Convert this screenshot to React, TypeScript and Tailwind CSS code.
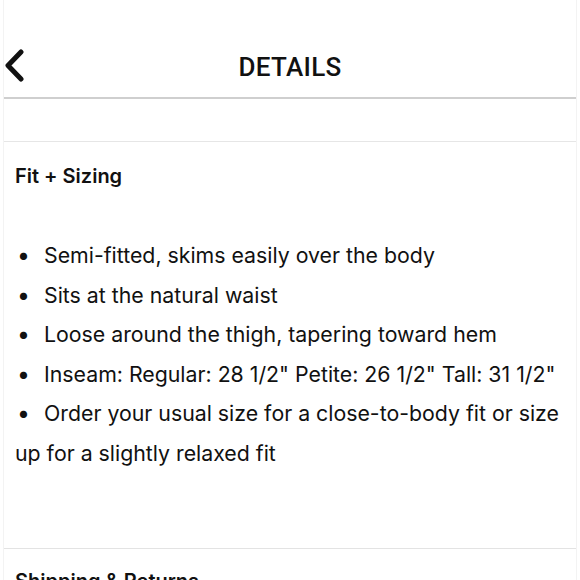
import React from 'react';

const bullets = [
    'Semi-fitted, skims easily over the body',
    'Sits at the natural waist',
    'Loose around the thigh, tapering toward hem',
    'Inseam: Regular: 28 1/2" Petite: 26 1/2" Tall: 31 1/2"',
];

export default function App() {
    const body = { fontFamily: 'Inter, "Noto Sans", sans-serif', fontVariantLigatures: 'none' as const };

    return (
        <div className="w-[580px] h-[580px] overflow-hidden bg-white text-[#111]">
            <div className="mx-[3px] h-full border-x border-[#f3f3f3]">
                <header className="relative h-[99px] border-b-2 border-[#cfcfcf] flex items-end pb-[15px] justify-center">
                    <button className="absolute left-0 top-[49px] w-[21px] h-[33px]">
                        <svg viewBox="0 0 21 33" className="w-[21px] h-[33px]">
                            <path d="M17 3 L4 16.5 L17 30" fill="none" stroke="#111" strokeWidth="5" strokeLinecap="round" strokeLinejoin="round" />
                        </svg>
                    </button>
                    <h1 className="text-[26px] leading-[30px] font-medium tracking-[0.3px]" style={{ fontFamily: 'Roboto, Arial, sans-serif' }}>
                        DETAILS
                    </h1>
                </header>

                <div className="h-[43px] border-b border-[#e6e6e6]" />

                <section className="h-[407px] border-b border-[#e3e3e3] px-[11px]" style={body}>
                    <h2 className="pt-[21px] text-[20px] leading-[26px] font-semibold">Fit + Sizing</h2>
                    <ul className="mt-[47px] text-[21.3px] leading-[39.6px]">
                        {bullets.map((b) => (
                            <li key={b} className="flex whitespace-nowrap">
                                <span className="w-[29px] pl-[2px] text-[23px]">•</span>
                                <span>{b}</span>
                            </li>
                        ))}
                        <li className="flex whitespace-nowrap">
                            <span className="w-[29px] pl-[2px] text-[23px]">•</span>
                            <span>Order your usual size for a close-to-body fit or size</span>
                        </li>
                        <li className="whitespace-nowrap">up for a slightly relaxed fit</li>
                    </ul>
                </section>

                <h2 className="px-[11px] pt-[19px] text-[20px] leading-[26px] font-semibold" style={body}>
                    Shipping &amp; Returns
                </h2>
            </div>
        </div>
    );
}
